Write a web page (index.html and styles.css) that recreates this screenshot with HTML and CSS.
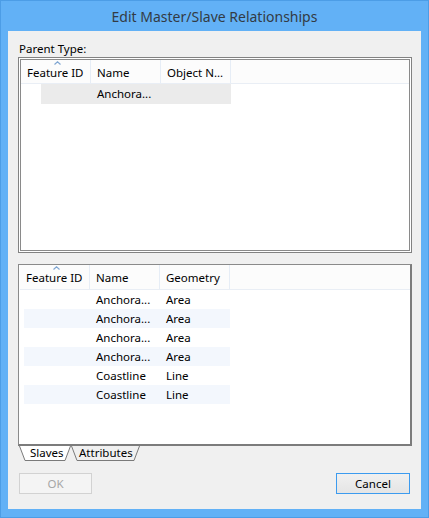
FILE: index.html
```html
<!DOCTYPE html>
<html>
<head>
<meta charset="utf-8">
<link rel="stylesheet" href="styles.css">
</head>
<body>
<div class="window">
  <div class="titlebar">Edit Master/Slave Relationships</div>
  <div class="client">
    <div class="label">Parent Type:</div>
    <div class="listbox top-box">
      <div class="header">
        <div class="hcell"><span class="sort"><svg width="7" height="4" viewBox="0 0 7 4"><polyline points="0.5,3.5 3.5,0.8 6.5,3.5" fill="none" stroke="#7fa6d2" stroke-width="1.2"/></svg></span>Feature ID</div>
        <div class="hcell">Name</div>
        <div class="hcell">Object N...</div>
        <div class="hfill"></div>
      </div>
      <div class="row selected"><div class="cell first"></div><div class="cell">Anchora...</div><div class="cell"></div></div>
    </div>
    <div class="listbox bottom-box">
      <div class="header">
        <div class="hcell"><span class="sort"><svg width="7" height="4" viewBox="0 0 7 4"><polyline points="0.5,3.5 3.5,0.8 6.5,3.5" fill="none" stroke="#7fa6d2" stroke-width="1.2"/></svg></span>Feature ID</div>
        <div class="hcell">Name</div>
        <div class="hcell">Geometry</div>
        <div class="hfill"></div>
      </div>
      <div class="rows">
        <div class="row"><div class="cell first"></div><div class="cell">Anchora...</div><div class="cell">Area</div></div>
        <div class="row alt"><div class="cell first"></div><div class="cell">Anchora...</div><div class="cell">Area</div></div>
        <div class="row"><div class="cell first"></div><div class="cell">Anchora...</div><div class="cell">Area</div></div>
        <div class="row alt"><div class="cell first"></div><div class="cell">Anchora...</div><div class="cell">Area</div></div>
        <div class="row"><div class="cell first"></div><div class="cell">Coastline</div><div class="cell">Line</div></div>
        <div class="row alt"><div class="cell first"></div><div class="cell">Coastline</div><div class="cell">Line</div></div>
      </div>
    </div>
    <div class="tabs">
      <div class="tab active">
        <svg class="tabshape" width="52" height="15" viewBox="0 0 52 15"><polygon points="0.5,0 6,14.5 46,14.5 51.5,0" fill="#ffffff"/><polyline points="0.5,0 6,14.5 46,14.5 51.5,0" fill="none" stroke="#7a7a7a"/></svg>
        <span class="tabtext">Slaves</span>
      </div>
      <div class="tab">
        <svg class="tabshape" width="69" height="15" viewBox="0 0 69 15"><polygon points="0.5,0 6,14.5 63,14.5 68.5,0" fill="#f0f0f0"/><polyline points="0.5,0 6,14.5 63,14.5 68.5,0" fill="none" stroke="#7a7a7a"/></svg>
        <span class="tabtext">Attributes</span>
      </div>
    </div>
    <div class="buttons">
      <div class="btn disabled">OK</div>
      <div class="btn default">Cancel</div>
    </div>
  </div>
</div>
</body>
</html>
```
FILE: styles.css
```css
html, body {
  margin: 0;
  padding: 0;
}
body {
  width: 429px;
  height: 518px;
  overflow: hidden;
  font-family: "Noto Sans", "Open Sans", sans-serif;
  font-size: 11.5px;
  color: #000;
}
.window {
  box-sizing: border-box;
  width: 429px;
  height: 518px;
  background: #62b1f6;
  border: 1px solid #4c9de6;
  padding: 0 7px 8px 7px;
  display: flex;
  flex-direction: column;
}
.titlebar {
  height: 30px;
  line-height: 31px;
  text-align: center;
  font-size: 14px;
  color: #333b44;
}
.client {
  flex: 1;
  background: #f0f0f0;
  padding: 10px 9px 0 10px;
  display: flex;
  flex-direction: column;
}
.label {
  height: 16px;
  line-height: 15px;
  padding-left: 1px;
  color: #000;
}
.listbox {
  box-sizing: border-box;
  background: #fff;
  width: 394px;
}
.top-box {
  height: 196px;
  border: 1px solid #828282;
  box-shadow: inset 0 0 0 1px #ffffff, inset 0 0 0 2px #8a8a8a;
  padding: 2px;
}
.bottom-box {
  margin-top: 11px;
  height: 182px;
  border-top: 1px solid #8a8a8a;
  border-left: 1px solid #8a8a8a;
  border-right: 2px solid #7c7c7c;
  border-bottom: 2px solid #7c7c7c;
  padding: 0 0 0 1px;
}
.header {
  display: flex;
  height: 24px;
  background: #fcfcfc;
  border-bottom: 1px solid #e9eef5;
}
.top-box .header { height: 23px; }
.hcell {
  position: relative;
  box-sizing: border-box;
  width: 70px;
  padding-left: 6px;
  line-height: 25px;
  border-right: 1px solid #e6edf6;
  white-space: nowrap;
}
.hfill { flex: 1; }
.sort {
  position: absolute;
  left: 33px;
  top: 1px;
  line-height: 0;
}
.row {
  display: flex;
  height: 19px;
  line-height: 19px;
}
.top-box .row { height: 20px; line-height: 20px; }
.cell {
  box-sizing: border-box;
  width: 70px;
  padding-left: 6px;
  white-space: nowrap;
}
.row.alt {
  background: linear-gradient(to right, transparent 4px, #f3f7fd 4px, #f3f7fd 210px, transparent 210px);
}
.row.selected {
  background: linear-gradient(to right, transparent 20px, #ebebeb 20px, #ebebeb 210px, transparent 210px);
}
.tabs {
  display: flex;
  height: 15px;
  padding-left: 1px;
}
.tab {
  position: relative;
  height: 15px;
  line-height: 14px;
}
.tab.active { width: 52px; z-index: 2; }
.tab:not(.active) { width: 69px; z-index: 1; }
.tabshape {
  position: absolute;
  left: 0;
  top: 0;
}
.tabtext {
  position: relative;
  display: block;
  padding-left: 11px;
  z-index: 1;
}
.tab:not(.active) .tabtext { padding-left: 8px; }
.buttons {
  display: flex;
  justify-content: space-between;
  margin-top: 12px;
  padding-left: 1px;
  padding-right: 2px;
}
.btn {
  box-sizing: border-box;
  height: 21px;
  line-height: 19px;
  text-align: center;
}
.btn.disabled {
  width: 73px;
  border: 1px solid #d2d2d2;
  background: #f4f4f4;
  color: #a6a6a6;
}
.btn.default {
  width: 74px;
  border: 1px solid #3c9bef;
  background: linear-gradient(#f0f0f0, #e5e5e5);
  color: #000;
}
```
